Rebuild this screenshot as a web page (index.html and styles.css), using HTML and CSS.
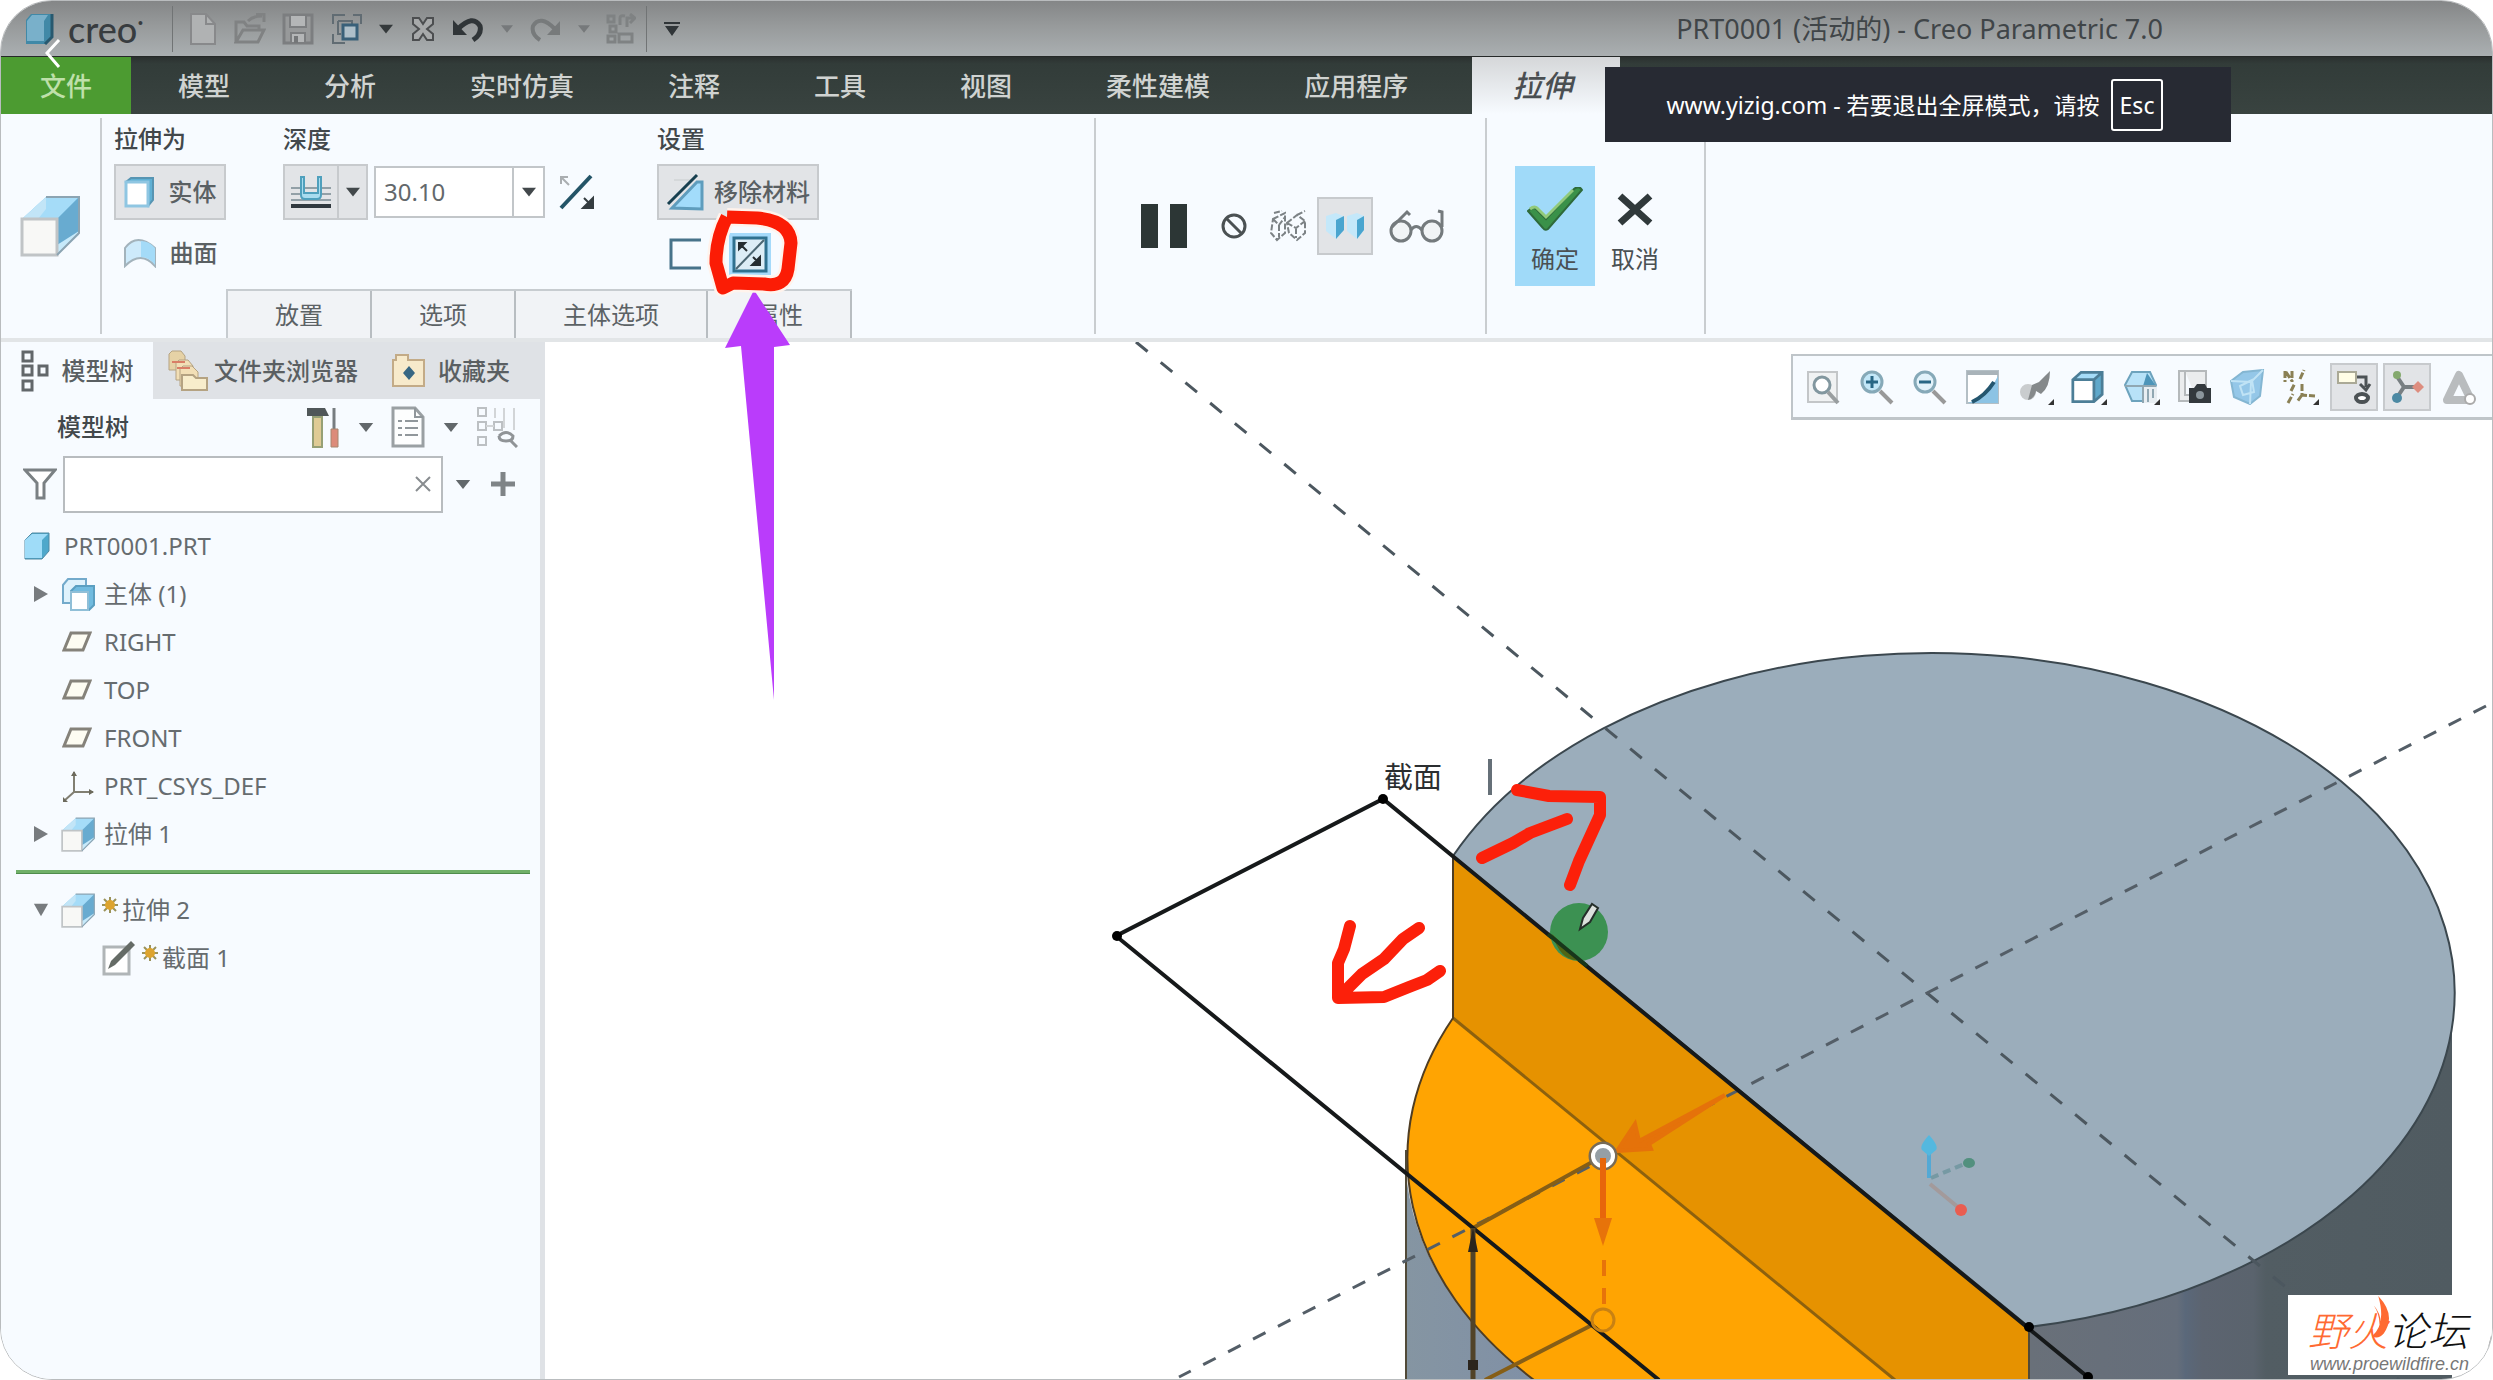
FILE: index.html
```html
<!DOCTYPE html>
<html lang="zh-CN">
<head>
<meta charset="utf-8">
<title>PRT0001 (活动的) - Creo Parametric 7.0</title>
<link rel="stylesheet" href="styles.css">
</head>
<body>
<svg class="defs" aria-hidden="true">
  <symbol id="down" viewBox="0 0 16 10"><path d="M0 0h16L8 10z" fill="currentColor"/></symbol>
  <symbol id="extrude" viewBox="0 0 62 62"><path d="M2 24L26 2h33v36L37 60V24z" fill="#8fd0f2"/><path d="M26 2h33L37 24H2z" fill="#a5dcf8"/><path d="M59 2v36L37 60V24z" fill="#68abd0"/><path d="M37 50l22-14v4L37 60z" fill="#c6e9fa"/><path d="M26 2v12l-8 10H2z" fill="#c2e5f7"/><path d="M2 24h35v36H2z" fill="#f8f8f6" stroke="#c0c4c6" stroke-width="3"/><path d="M26 2h33v36L37 60" fill="none" stroke="#8ca4b2" stroke-width="2"/></symbol>
  <symbol id="plane" viewBox="0 0 30 22"><path d="M9 2h19l-7 17H2z" fill="#fdfcf2" stroke="#85827a" stroke-width="3"/></symbol>
  <symbol id="spark" viewBox="0 0 16 16"><path d="M8 0v16M0 8h16M2 2l12 12M14 2L2 14" stroke="#9b9359" stroke-width="2"/><circle cx="8" cy="8" r="5" fill="#dda42f"/></symbol>
  <symbol id="cube" viewBox="0 0 36 36"><path d="M2 10l9-8h23v24l-9 8z" fill="#5fa8ca"/><path d="M2 10l9-8h23l-9 8z" fill="#a5dcf8"/><path d="M2 10h23v24H2z" fill="#fff"/><path d="M2 10l9-8h23v24l-9 8H2zh23v24M25 10l9-8" fill="none" stroke="#4c7e97" stroke-width="3"/></symbol>
  <symbol id="solid" viewBox="0 0 32 32"><path d="M2 6l5-4h22v22l-5 6z" fill="#5fb0d4" stroke="#5795b3" stroke-width="2"/><path d="M2 6h22v24H2z" fill="#fff" stroke="#8fc6e2" stroke-width="3"/></symbol>
</svg>
<div class="app">
  <header class="titlebar">
    <svg class="logo" viewBox="0 0 30 32"><path d="M7 1h21v23l-7 7H2V7z" fill="#4189a7"/><path d="M3 8l5-6h16l-4 6v20H3z" fill="#79b0ca"/><path d="M28 1v23l-7 7" fill="none" stroke="#28596f" stroke-width="3"/></svg>
    <span class="brand">creo<sup>·</sup></span>
    <div class="quick">
      <button class="q" aria-label="新建"><svg width="28" height="34" viewBox="0 0 28 34"><path d="M2 2h15l9 10v20H2z" fill="#b0b2b3" stroke="#88898b" stroke-width="2"/><path d="M17 2v10h9" fill="none" stroke="#88898b" stroke-width="2"/></svg></button>
      <button class="q" aria-label="打开"><svg width="32" height="32" viewBox="0 0 32 32"><path d="M2 29V9h8l3 4h12v5M2 29l7-12h21l-6 12zM14 8q5-5 14-5M22 1h8v8" fill="none" stroke="#808283" stroke-width="3"/></svg></button>
      <button class="q" aria-label="保存"><svg width="32" height="32" viewBox="0 0 32 32"><path d="M2 2h28v28H2z" fill="#97999a" stroke="#7c7e80" stroke-width="3"/><path d="M8 2h16v12H8zM9 20h14v10H9z" fill="#b4b6b7" stroke="#7c7e80" stroke-width="2"/><path d="M12 23h4v7h-4z" fill="#747678"/></svg></button>
      <button class="q" aria-label="窗口"><svg width="32" height="32" viewBox="0 0 32 32"><path d="M2 11V2h12M22 2h8v9M2 21v9h12M7 8h14v3M7 8v13h3" fill="none" stroke="#616c73" stroke-width="2"/><path d="M12 12h14v14H12z" fill="#aebfc9" stroke="#396079" stroke-width="3"/></svg></button>
      <button class="q small" aria-label="窗口列表"><svg width="14" height="10"><use href="#down"/></svg></button>
      <button class="q" aria-label="关闭"><svg width="26" height="28" viewBox="0 0 26 28"><path d="M3 3h6l4 6 4-6h6v6l-6 5 6 5v6h-6l-4-6-4 6H3v-6l6-5-6-5z" fill="#a7a9aa" stroke="#4c4e50" stroke-width="2"/></svg></button>
      <button class="q" aria-label="撤销"><svg width="32" height="28" viewBox="0 0 32 28"><path d="M6 14Q21-1 28 11q2 8-7 14" fill="none" stroke="#303538" stroke-width="5"/><path d="M1 5v15h14z" fill="#303538"/></svg></button>
      <button class="q small pale" aria-label="撤销列表"><svg width="12" height="8"><use href="#down"/></svg></button>
      <button class="q" aria-label="重做"><svg width="32" height="28" viewBox="0 0 32 28"><path d="M26 14Q11-1 4 11q-2 8 7 14" fill="none" stroke="#777a7b" stroke-width="4"/><path d="M31 6v14H18z" fill="#777a7b"/></svg></button>
      <button class="q small pale" aria-label="重做列表"><svg width="12" height="8"><use href="#down"/></svg></button>
      <button class="q" aria-label="重新生成"><svg width="30" height="32" viewBox="0 0 30 32"><path d="M2 3h6v6H2zM4 13h6v6H4zM2 23h7v6H2zM13 21h13v8H13zM14 12V5q0-3 5-2M21 14V5h6M24 1l5 4-5 5" fill="none" stroke="#7f8283" stroke-width="3"/></svg></button>
    </div>
    <button class="more" aria-label="自定义"><svg width="16" height="14" viewBox="0 0 16 14"><path d="M0 0h16v2H0zM1 4h14L8 14z" fill="#303538"/></svg></button>
    <h1 class="title">PRT0001 (活动的) - Creo Parametric 7.0</h1>
  </header>

  <nav class="tabs">
    <button class="tab file">文件</button><button class="tab">模型</button><button class="tab">分析</button><button class="tab">实时仿真</button><button class="tab">注释</button><button class="tab">工具</button><button class="tab">视图</button><button class="tab">柔性建模</button><button class="tab last">应用程序</button><button class="tab active">拉伸</button>
  </nav>

  <section class="ribbon">
    <div class="feature"><svg width="62" height="62"><use href="#extrude"/></svg></div>
    <div class="settings">
      <div class="groups">
        <div class="group type">
          <h2>拉伸为</h2>
          <button class="tool on"><svg width="32" height="32"><use href="#solid"/></svg>实体</button>
          <button class="tool"><svg width="34" height="30" viewBox="0 0 34 30"><path d="M2 28V10Q14-6 32 10v18Q18 12 2 28z" fill="#cdeafb" stroke="#a3b3bc" stroke-width="2"/><path d="M18 3v16q8 0 14 8V10Q26 3 18 3z" fill="#a4dbf8"/></svg>曲面</button>
        </div>
        <div class="group depth">
          <h2 id="depth-label">深度</h2>
          <div class="line">
            <div class="split"><button aria-label="深度选项"><svg width="42" height="34" viewBox="0 0 42 34"><path d="M1 13h40M1 19h40M1 25h40" stroke="#92a0a7" stroke-width="2"/><path d="M11 2v18q0 4 4 4h12q4 0 4-4V2h-3v16H14V2z" fill="#a9dcef" stroke="#4fa0bd" stroke-width="2"/><path d="M1 31h40" stroke="#30393f" stroke-width="4"/></svg></button><button class="drop" aria-label="深度列表"><svg width="14" height="10"><use href="#down"/></svg></button></div>
            <div class="combo"><input type="text" value="30.10" aria-labelledby="depth-label"><button class="drop" aria-label="最近的值"><svg width="14" height="10"><use href="#down"/></svg></button></div>
            <button class="flip" aria-label="反向"><svg width="36" height="36" viewBox="0 0 36 36"><path d="M2 34L32 2" stroke="#235467" stroke-width="4"/><path d="M2 10V3h7M3 4l7 7" fill="none" stroke="#aaaeb1" stroke-width="2"/><path d="M25 24l6 6M34 24v10H24z" fill="#343c40" stroke="#343c40" stroke-width="2"/></svg></button>
          </div>
        </div>
        <div class="group set">
          <h2>设置</h2>
          <button class="tool on remove"><svg width="38" height="38" viewBox="0 0 38 38"><path d="M8 7h18" stroke="#d5d8da" stroke-width="2"/><path d="M6 35L31 9h5v27z" fill="#a2dcfb" stroke="#5f9dbd" stroke-width="3"/><path d="M2 31L31 2" stroke="#173f4f" stroke-width="3"/></svg>移除材料</button>
          <div class="line second">
            <button class="plain" aria-label="加厚草绘"><svg width="32" height="32" viewBox="0 0 32 32"><path d="M32 2H2v28h30" fill="none" stroke="#47738a" stroke-width="3"/></svg></button>
            <div class="flip-side">
              <button aria-label="反向材料侧"><svg width="42" height="42" viewBox="0 0 42 42"><path d="M0 0h42v42H0z" fill="#a5dafa"/><path d="M5 5h32v33H5z" fill="#dcedf6" stroke="#2f718f" stroke-width="3"/><path d="M7 36L35 7" stroke="#4b6672" stroke-width="2"/><path d="M10 16V10h6zM13 13l5 5M24 24l5 5M31 24v8h-8z" fill="#252d31" stroke="#252d31" stroke-width="2"/></svg></button>
              <svg class="markup" width="120" height="500" viewBox="700 200 120 500" aria-hidden="true">
                <path d="M755 290L791 345L775 347V700L742 346L726 348z" fill="#ba3cfb"/>
                <path d="M728 217L758 218Q791 221 792 243L789 269Q786 288 765 284L734 283L724 288L717 263Q717 238 728 217" fill="none" stroke="#fff3ec" stroke-width="18" stroke-linejoin="round"/>
                <path d="M728 217L758 218Q791 221 792 243L789 269Q786 288 765 284L734 283L724 288L717 263Q717 238 728 217" fill="none" stroke="#fb1c05" stroke-width="13" stroke-linejoin="round"/>
              </svg>
            </div>
          </div>
        </div>
      </div>
      <div class="subtabs"><button>放置</button><button>选项</button><button>主体选项</button><button>属性</button></div>
    </div>
    <div class="control">
      <button aria-label="暂停"><svg width="46" height="44" viewBox="0 0 46 44"><path d="M0 0h17v44H0zM29 0h17v44H29z" fill="#2c3635"/></svg></button>
      <button aria-label="无预览"><svg width="26" height="28" viewBox="0 0 26 28"><circle cx="13" cy="14" r="11" fill="none" stroke="#4b5153" stroke-width="3"/><path d="M5 6l16 16" stroke="#4b5153" stroke-width="3"/></svg></button>
      <button aria-label="分离"><svg width="38" height="34" viewBox="0 0 38 34"><path d="M4 10l12-6v20l-8 7-6-7zM4 10l6 6 6-8M10 16v12M18 14l10-8 8 6v12l-8 7-8-7zM18 14l9 5 9-7M27 19v10M5 4l8-2M28 6l8-4" fill="none" stroke="#7c8285" stroke-width="2" stroke-dasharray="6 2"/></svg></button>
      <button class="on" aria-label="连接"><svg width="40" height="28" viewBox="0 0 40 28"><path d="M1 4l10-3 7 3v14l-7 9L1 19z" fill="#c4e8fa"/><path d="M11 8l8-4v14l-8 9z" fill="#4aa5cf"/><path d="M22 4l10-3 7 3v14l-7 9-10-8z" fill="#c4e8fa"/><path d="M32 8l7-4v14l-7 9z" fill="#4aa5cf"/></svg></button>
      <button aria-label="预览"><svg width="56" height="34" viewBox="0 0 56 34"><circle cx="12" cy="22" r="10" fill="#f1f4f6" stroke="#747a7d" stroke-width="3"/><circle cx="43" cy="22" r="10" fill="#f1f4f6" stroke="#747a7d" stroke-width="3"/><path d="M22 21q5-7 11 0M3 18L18 3l3 3M53 18V3l-4-1" fill="none" stroke="#747a7d" stroke-width="3"/></svg></button>
    </div>
    <div class="finish">
      <button class="ok"><svg width="56" height="44" viewBox="0 0 56 44"><path d="M1 24q6-6 10 0l8 8L47 2q5-4 8 1L21 42q-3 2-5-1z" fill="#3a9149" stroke="#2e6a3a" stroke-width="2"/><path d="M3 22q5-4 8 0l8 8L46 3" fill="none" stroke="#92ca7b" stroke-width="3"/></svg>确定</button>
      <button><svg width="38" height="44" viewBox="0 0 38 44"><path d="M4 9l30 27M34 9L4 36" stroke="#30393b" stroke-width="7"/></svg>取消</button>
    </div>
  </section>

  <main class="work">
    <aside class="side">
      <div class="side-tabs">
        <button class="current"><svg width="28" height="42" viewBox="0 0 28 42"><path d="M2 2h9v9H2zM2 16h9v9H2zM2 31h9v9H2zM18 16h8v9h-8z" fill="none" stroke="#62676a" stroke-width="3"/></svg>模型树</button>
        <button class="folders"><svg width="40" height="42" viewBox="0 0 40 42"><path d="M1 4l3-3h9l4 5v14H1z" fill="#e6d2a6" stroke="#b5a382"/><path d="M8 13l3-3h9l5 6v14H8z" fill="#f2dfb6" stroke="#b5a382"/><path d="M12 19l3-3h9l6 6v14H12z" fill="#f2dfb6" stroke="#b5a382"/><path d="M4 12h13M9 18h13" stroke="#d97e66" stroke-width="2"/><path d="M14 25h11l3 3h11v12H14z" fill="#f8edcb" stroke="#b5a382" stroke-width="2"/></svg>文件夹浏览器</button>
        <button class="favs"><svg width="36" height="34" viewBox="0 0 36 34"><path d="M2 6h3V1h12v5h16v26H2z" fill="#f7eacb" stroke="#c3ab87" stroke-width="2"/><path d="M18 12l6 7-6 7-6-7z" fill="#376783"/></svg>收藏夹</button>
      </div>
      <div class="side-head">
        <h2>模型树</h2>
        <button aria-label="设置"><svg width="34" height="42" viewBox="0 0 34 42"><path d="M7 11h9v30H7z" fill="#dfcb95" stroke="#96a075" stroke-width="2"/><path d="M1 2h18l4 8H1z" fill="#505759"/><path d="M28 2v24" stroke="#777d80" stroke-width="3"/><path d="M25 23h7v18h-7z" fill="#dc8b7a" stroke="#a6866e"/></svg></button>
        <button class="arrow" aria-label="设置列表"><svg width="16" height="9"><use href="#down"/></svg></button>
        <button aria-label="显示"><svg width="34" height="42" viewBox="0 0 34 42"><path d="M2 2h22l8 9v29H2z" fill="#fdfefe" stroke="#9aa0a3" stroke-width="3"/><path d="M24 2v9h8M7 15h4M14 15h13M7 22h4M14 22h13M7 29h4M14 29h13" fill="none" stroke="#90979b" stroke-width="2"/></svg></button>
        <button class="arrow" aria-label="显示列表"><svg width="16" height="9"><use href="#down"/></svg></button>
        <button class="find" aria-label="查找"><svg width="42" height="42" viewBox="0 0 42 42"><path d="M2 2h8v8H2zM2 16h8v8H2zM2 31h8v8H2zM18 16h8v8h-8z" fill="none" stroke="#bcc0c3" stroke-width="2"/><path d="M19 2v10M28 2v20M38 2v22M10 20h8" stroke="#d2d5d7" stroke-width="2"/><path d="M23 30q7-7 14 0 0 5-7 5t-7-5M34 34l7 7" fill="none" stroke="#909497" stroke-width="3"/></svg></button>
      </div>
      <div class="search">
        <svg width="34" height="32" viewBox="0 0 34 32"><path d="M2 2h30L21 15v15h-7V15z" fill="#fff" stroke="#7a8083" stroke-width="3"/></svg>
        <div class="field"><input type="search" aria-label="搜索模型树"><button aria-label="清除"><svg width="18" height="18" viewBox="0 0 18 18"><path d="M2 2l14 14M16 2L2 16" stroke="#888c8f" stroke-width="2"/></svg></button></div>
        <button class="arrow" aria-label="过滤列表"><svg width="16" height="9"><use href="#down"/></svg></button>
        <button class="add" aria-label="添加"><svg width="24" height="24" viewBox="0 0 24 24"><path d="M12 0v24M0 12h24" stroke="#7f8487" stroke-width="5"/></svg></button>
      </div>
      <ul class="tree">
        <li class="root"><svg width="28" height="28" viewBox="0 0 28 28"><path d="M2 8l7-7h17v18l-7 8H2z" fill="#4fa8cb" stroke="#5189a2"/><path d="M2 8l7-6h16l-6 6v18H2z" fill="#9fdcf8"/></svg>PRT0001.PRT</li>
        <li><svg class="caret" viewBox="0 0 16 18"><path d="M1 1l14 8-14 8z"/></svg><svg width="35" height="35" viewBox="0 0 35 35"><path d="M2 8l5-6h18v18l-5 6H2z" fill="#dff2fc" stroke="#73aacb" stroke-width="2"/><path d="M10 14l5-5h18v19l-5 5H10z" fill="#71bbdf" stroke="#5b9fc1" stroke-width="2"/><path d="M10 15h17v18H10z" fill="#fff" stroke="#90bfd7" stroke-width="2"/></svg>主体 (1)</li>
        <li class="leaf"><svg width="30" height="22"><use href="#plane"/></svg>RIGHT</li>
        <li class="leaf"><svg width="30" height="22"><use href="#plane"/></svg>TOP</li>
        <li class="leaf"><svg width="30" height="22"><use href="#plane"/></svg>FRONT</li>
        <li class="leaf"><svg width="33" height="33" viewBox="0 0 33 33"><path d="M12 2v20h19M12 22L2 31" fill="none" stroke="#817f72" stroke-width="2"/><path d="M9 6l3-5 3 5zM27 19l5 3-5 3zM1 27v5h5z" fill="#6c6a5c"/></svg>PRT_CSYS_DEF</li>
        <li><svg class="caret" viewBox="0 0 16 18"><path d="M1 1l14 8-14 8z"/></svg><svg width="35" height="35"><use href="#extrude"/></svg>拉伸 1</li>
        <li class="insert" aria-label="在此插入"></li>
        <li><svg class="caret" viewBox="0 0 18 16"><path d="M1 1h16L9 15z"/></svg><svg width="35" height="35"><use href="#extrude"/></svg><svg class="spark" width="16" height="16"><use href="#spark"/></svg>拉伸 2</li>
        <li class="nested"><svg width="34" height="36" viewBox="0 0 34 36"><path d="M2 7h25v27H2z" fill="#fff" stroke="#b0b5b7" stroke-width="3"/><path d="M6 29l3-8L29 1l4 4-20 20z" fill="#656b66"/></svg><svg class="spark" width="16" height="16"><use href="#spark"/></svg>截面 1</li>
      </ul>
    </aside>

    <div class="viewport">
      <svg class="scene" viewBox="546 342 1947 1038" preserveAspectRatio="xMinYMin slice" role="img" aria-label="拉伸切割预览">
        <defs>
          <linearGradient id="wall"><stop offset="0" stop-color="#697079"/><stop offset=".35" stop-color="#656e7b"/><stop offset=".37" stop-color="#5a687a"/><stop offset=".41" stop-color="#5c6470"/><stop offset=".53" stop-color="#5a636d"/><stop offset=".56" stop-color="#525d63"/><stop offset="1" stop-color="#505b61"/></linearGradient>
          <linearGradient id="wall2"><stop offset="0" stop-color="#8595a2"/><stop offset="1" stop-color="#8090a6"/></linearGradient>
        </defs>
        <path d="M2030 1327V1380H2453V993z" fill="url(#wall)"/>
        <path d="M1406 1150V1380H1536Q1406 1280 1406 1150" fill="url(#wall2)"/>
        <path d="M1454 856A523 340 0 1 1 2030 1327z" fill="#9badbb" stroke="#3b474e" stroke-width="2"/>
        <path d="M1454 1018A522 341 0 0 0 1535 1380H1896z" fill="#ffa402"/>
        <path d="M1454 856L2030 1327V1380H1896L1454 1018z" fill="#e69200"/>
        <path d="M1454 1018L1896 1380" stroke="#8d610e" stroke-width="3"/>
        <path d="M1454 856V1018A522 341 0 0 0 1535 1380" fill="none" stroke="#4f3d23" stroke-width="2"/>
        <path d="M1407 1150V1380M2030 1327V1380" stroke="#514a38" stroke-width="2"/>
        <path d="M1137 342L1928 993L2400 1380" fill="none" stroke="#4c575f" stroke-width="3" stroke-dasharray="15 17"/>
        <path d="M2487 706L1928 993L1740 1090L1180 1377" fill="none" stroke="#545e67" stroke-width="3" stroke-dasharray="14 14"/>
        <path d="M1604 1156L1474 1228M1593 1325L1486 1380" stroke="#865e16" stroke-width="4"/>
        <path d="M1660 1380L1117 936L1384 799L2090 1378" fill="none" stroke="#16191a" stroke-width="4"/>
        <circle cx="1118" cy="936" r="5"/><circle cx="1384" cy="799" r="5"/><circle cx="2030" cy="1327" r="5"/><circle cx="2089" cy="1377" r="5"/>
        <path d="M1474 1228V1380" stroke="#514328" stroke-width="5"/><path d="M1469 1252h10l-5-24zM1469 1360h10v10h-10z" fill="#2b251d"/>
        <path d="M1726 1095L1640 1141L1636 1124L1618 1151L1652 1149L1650 1144z" fill="#e5720a" stroke="#e5720a" stroke-width="4"/>
        <circle cx="1604" cy="1156" r="13" fill="#d3d8dc" stroke="#776b57" stroke-width="3"/><circle cx="1604" cy="1156" r="10" fill="#959fa5" stroke="#fff" stroke-width="4"/>
        <path d="M1604 1158V1225" stroke="#e7660b" stroke-width="6"/><path d="M1595 1218h18l-9 28z" fill="#e7730a"/><path d="M1605 1260V1305" stroke="#e7730a" stroke-width="4" stroke-dasharray="16 12"/>
        <circle cx="1604" cy="1320" r="11" fill="none" stroke="#c88113" stroke-width="3"/>
        <text x="1385" y="788" class="section-name">截面</text><path d="M1491 759V795" stroke="#667078" stroke-width="4"/>
        <g fill="none" stroke="#fc200a" stroke-width="12" stroke-linecap="round" stroke-linejoin="round"><path d="M1518 790L1550 796L1601 797V815L1580 861L1571 885M1483 858L1514 843L1531 833L1568 819M1351 926L1345 949L1339 963V998L1385 997L1410 987L1428 980L1441 971M1420 928L1404 939L1385 959L1363 974L1340 997"/></g>
        <circle cx="1580" cy="932" r="29" fill="#3c9152"/><path d="M1553 934L1580 960Q1562 962 1553 934" fill="#506514"/><path d="M1549 934L1588 966" stroke="#18361b" stroke-width="4"/>
        <path d="M1581 929l3-11 9-14 6 4-8 14z" fill="#dce1dd" stroke="#252e29" stroke-width="2"/>
        <path d="M1930 1178V1145" stroke="#53a9d5" stroke-width="4"/><path d="M1930 1135q10 11 7 15l-7 6-7-6q-3-4 7-15" fill="#54b8df"/><path d="M1932 1178L1970 1162" stroke="#7699a3" stroke-width="4" stroke-dasharray="8 5"/><ellipse cx="1970" cy="1163" rx="6" ry="5" fill="#52907e"/><path d="M1931 1184L1960 1208" stroke="#a39a9b" stroke-width="4"/><circle cx="1962" cy="1210" r="6" fill="#e95d50"/>
      </svg>
      <div class="viewbar">
        <button aria-label="重新调整"><svg viewBox="0 0 36 36"><path d="M2 3h29v30H2z" fill="#f0f2f3" stroke="#c3c6c8" stroke-width="2"/><circle cx="16" cy="16" r="8" fill="#fff" stroke="#82979f" stroke-width="3"/><path d="M22 23l10 11" stroke="#999ea0" stroke-width="4"/></svg></button>
        <button aria-label="放大"><svg viewBox="0 0 36 36"><circle cx="13" cy="13" r="10" fill="#c3e7f8" stroke="#86a9b8" stroke-width="3"/><path d="M7 13h12M13 7v12" stroke="#286785" stroke-width="3"/><path d="M21 22l12 12" stroke="#999" stroke-width="4"/></svg></button>
        <button aria-label="缩小"><svg viewBox="0 0 36 36"><circle cx="13" cy="13" r="10" fill="#e2f2fa" stroke="#86a9b8" stroke-width="3"/><path d="M7 13h12" stroke="#286785" stroke-width="3"/><path d="M21 22l12 12" stroke="#999" stroke-width="4"/></svg></button>
        <button aria-label="重画"><svg viewBox="0 0 36 36"><path d="M2 2h31v32H2z" fill="#fff" stroke="#b4bfc5" stroke-width="2"/><path d="M2 2h31v4H2z" fill="#a9b3b9"/><path d="M33 7v27H3Q23 27 33 7" fill="#8cc3e4"/><path d="M7 33Q20 27 29 13" fill="none" stroke="#24566f" stroke-width="4"/></svg></button>
        <button aria-label="渲染选项"><svg viewBox="0 0 36 36"><circle cx="10" cy="23" r="8" fill="#c9ccce"/><path d="M10 31q7-2 8-9l5 3q9-7 9-23-7 7-11 11l-7 3z" fill="#85898b"/><path d="M36 30v6h-6z" fill="#333"/></svg></button>
        <button aria-label="显示样式"><svg viewBox="0 0 36 36"><use href="#cube" width="33" height="36"/><path d="M36 30v6h-6z" fill="#333"/></svg></button>
        <button aria-label="已保存方向"><svg viewBox="0 0 36 36"><path d="M1 16L8 3h18l6 13-6 16H8z" fill="#b8e2f8" stroke="#6da3bd" stroke-width="2"/><path d="M23 4l9 13H19z" fill="#4d95b9"/><path d="M19 18h14v16H19z" fill="#e8eef2"/><path d="M1 17h31M19 17v17M24 20v13M29 20v9" stroke="#90a7b2" stroke-width="2"/><path d="M36 30v6h-6z" fill="#333"/></svg></button>
        <button aria-label="视图管理器"><svg viewBox="0 0 36 36"><path d="M2 2h27v30H2zM8 2v24h10" fill="#ebedee" stroke="#b5b9bb" stroke-width="2"/><path d="M12 19h5l3-4h8l2 4h4v15H12z" fill="#33393d"/><circle cx="23" cy="26" r="4" fill="#8b969c"/></svg></button>
        <button aria-label="透视图"><svg viewBox="0 0 36 36"><path d="M1 12l12-9 20-2-3 26-10 8-16-7z" fill="#94c7e8" stroke="#84b6d2" stroke-width="2"/><path d="M1 12l20 1L33 1M21 13l-1 22M10 17l12-6 2 12-11 3z" fill="none" stroke="#c0e3f5" stroke-width="2"/></svg></button>
        <button aria-label="基准显示"><svg viewBox="0 0 36 36"><path d="M2 2v11M9 2v11M3 3l6 9M17 10l4-9M8 22l4-8M5 34l5-9M19 15v11l13 1M19 26l-5 7" fill="none" stroke="#8a8055" stroke-width="3" stroke-dasharray="7 2"/><path d="M36 30v6h-6z" fill="#333"/></svg></button>
        <button class="on" aria-label="注释显示"><svg viewBox="0 0 36 36"><path d="M2 3h18v11H2z" fill="#fffde6" stroke="#aaa996" stroke-width="2"/><path d="M21 8h9v10M24 15l6 6 4-6" fill="none" stroke="#4c5255" stroke-width="3"/><ellipse cx="26" cy="29" rx="6" ry="4" fill="#fff" stroke="#4c5255" stroke-width="4"/></svg></button>
        <button class="on" aria-label="旋转中心"><svg viewBox="0 0 36 36"><path d="M7 6l8 12M7 30l8-12h14" fill="none" stroke="#787f82" stroke-width="4"/><circle cx="8" cy="6" r="4" fill="#84a96e"/><circle cx="8" cy="29" r="5" fill="#4c89a3"/><path d="M23 18l6-6 6 6-6 6z" fill="#dd8d7f"/></svg></button>
        <button aria-label="模拟"><svg viewBox="0 0 36 36"><path d="M17 6l12 25H5z" fill="none" stroke="#b9bcbe" stroke-width="8" stroke-linejoin="round"/><circle cx="28" cy="30" r="5" fill="#fff" stroke="#aaa" stroke-width="2"/></svg></button>
      </div>
      <div class="forum">
        <div class="forum-name"><span>野火</span>论坛</div>
        <a href="#">www.proewildfire.cn</a>
        <svg class="flame" viewBox="0 0 24 46" aria-hidden="true"><path d="M9 0Q29 21 15 41Q9 48 2 44Q18 31 9 0M4 10Q15 23 10 37Q12 22 4 10" fill="#ff6a32"/></svg>
        <svg class="slash" viewBox="0 0 6 20" aria-hidden="true"><path d="M1 20L6 1" stroke="#999" stroke-width="2"/></svg>
      </div>
    </div>
  </main>
  <button class="back" aria-label="返回"><svg width="16" height="30" viewBox="0 0 16 30"><path d="M14 1L2 14L14 28" fill="none" stroke="#fff" stroke-width="3"/></svg></button>
  <div class="notice">www.yizig.com - 若要退出全屏模式，请按<kbd>Esc</kbd></div>
</div>
</body>
</html>
```
FILE: styles.css
```css
* { box-sizing: border-box; }
body { margin: 0; background: #fff; font-family: "Noto Sans", "Noto Sans CJK SC", sans-serif; font-size: 24px; line-height: 32px; color: #42484b; }
button, input { font: inherit; color: inherit; margin: 0; padding: 0; border: 0; background: none; border-radius: 0; outline: 0; }
button { display: flex; align-items: center; justify-content: center; white-space: nowrap; flex: none; }
h1, h2 { margin: 0; font: inherit; }
svg { display: block; flex: none; }
.defs { position: absolute; width: 0; height: 0; }
.app { position: relative; display: flex; flex-direction: column; min-height: 100vh; border: 1px solid #b9bcbe; border-radius: 52px; overflow: hidden; background: #fff; }

.titlebar { display: flex; align-items: center; height: 55px; padding-left: 23px; background: linear-gradient(#848687, #979a9b 45%, #aaafb1); }
.logo { width: 30px; height: 32px; }
.brand { width: 104px; padding-left: 14px; font-family: Lato, sans-serif; font-size: 36px; font-weight: 500; color: #383c3f; }
.brand sup { font-size: 24px; line-height: 0; }
.quick { display: flex; align-items: center; justify-content: space-between; width: 475px; height: 46px; padding: 0 10px 0 16px; border: solid #717475; border-width: 0 1px; color: #34393b; margin-left: 14px; }
.pale { color: #76797b; }
.more { width: 50px; }
.title { margin-left: auto; padding-right: 329px; font-size: 27px; line-height: 54px; color: #404548; }

.tabs { display: flex; height: 58px; background: linear-gradient(#2b302f, #323c39 12%, #394340); border-top: 1px solid #252928; }
.tab { padding: 0 47px; font-size: 26px; font-weight: 500; color: #d0d3d1; }
.file { padding: 0 39px; background: #4c9b31; color: #bfe0aa; }
.last { padding-right: 64px; }
.active { width: 148px; padding: 0 8px 0 0; background: linear-gradient(#d5d7d9, #f7fbff); color: #4a4f52; font-size: 30px; font-style: italic; }

.ribbon { display: flex; height: 228px; background: #f7fbff; border-bottom: 4px solid #e2e5e7; }
.feature { display: flex; align-items: center; justify-content: center; width: 101px; margin: 4px 0; border-right: 2px solid #c9cdd0; }
.settings { position: relative; display: flex; flex-direction: column; justify-content: space-between; flex: 0 1 994px; padding-left: 12px; }
.settings::after { content: ""; position: absolute; right: 0; top: 4px; bottom: 4px; width: 2px; background: #c9cdd0; }
.groups { display: flex; }
.group { display: flex; flex-direction: column; align-items: flex-start; }
.group h2 { height: 38px; margin: 9px 0 3px; font-weight: 500; }
.type { width: 169px; }
.depth { width: 374px; }
.line { display: flex; align-items: center; gap: 6px; }
.tool { width: 112px; height: 56px; gap: 13px; border: 2px solid transparent; font-weight: 500; color: #5a6063; }
.tool + .tool { height: 66px; }
.on { background: #e2e4e7; border: 2px solid #c7cacd; }
.remove { width: 162px; gap: 10px; }
.split { display: flex; height: 56px; background: #e2e4e7; border: 2px solid #c7cacd; }
.split button { width: 52px; }
.split .drop { width: 29px; border-left: 2px solid #c7cacd; }
.combo { display: flex; width: 171px; height: 52px; background: #fff; border: 2px solid #c2c6c9; }
.combo input { flex: 1; min-width: 0; padding-left: 8px; color: #63686b; }
.combo .drop { width: 31px; border-left: 2px solid #c2c6c9; }
.flip { margin-left: 8px; }
.second { gap: 28px; padding-left: 12px; height: 68px; }
.flip-side { position: relative; }
.markup { position: absolute; left: -30px; top: -33px; z-index: 5; pointer-events: none; }
.subtabs { display: flex; height: 49px; margin-left: 112px; border: solid #c7ccd0; border-width: 2px 0 0 2px; align-self: flex-start; }
.subtabs button { padding: 0 47px; background: #f1f3f6; border-right: 2px solid #b8bdc1; color: #5c6265; }
.control { display: flex; align-items: center; justify-content: center; width: 391px; margin: 4px 0; padding-left: 4px; border-right: 2px solid #c9cdd0; }
.control button { margin-right: 16px; height: 58px; }
.control button:first-child { margin-right: 34px; }
.control button:nth-child(2) { margin-right: 22px; }
.control button:nth-child(3) { margin-right: 10px; }
.control .on { width: 56px; }
.control button:last-child { margin-right: 0; }
.finish { display: flex; align-items: center; width: 219px; padding-left: 28px; margin: 4px 0; border-right: 2px solid #c9cdd0; }
.finish button { flex-direction: column; gap: 12px; width: 80px; height: 120px; padding-top: 10px; color: #4a5053; }
.finish .ok { background: #a0daf9; }

.work { display: flex; flex: 1; }
.side { width: 544px; flex: none; background: #f7fbff; border-right: 5px solid #dfe2e6; }
.side-tabs { display: flex; height: 57px; background: #dfe2e6; }
.side-tabs button { gap: 13px; font-weight: 500; color: #5a5f62; }
.side-tabs .current { width: 152px; background: #f7fbff; }
.side-tabs .folders { gap: 6px; padding-left: 15px; }
.side-tabs .favs { gap: 11px; padding-left: 33px; }
.side-head { display: flex; align-items: center; height: 56px; padding-left: 56px; }
.side-head h2 { width: 249px; font-weight: 500; }
.arrow { width: 51px; color: #62686b; }
.search { display: flex; align-items: center; height: 58px; padding-left: 22px; gap: 6px; }
.field { position: relative; width: 380px; height: 57px; }
.field input { width: 100%; height: 100%; padding: 0 40px 0 10px; background: #fff; border: 2px solid #b8bcbf; }
.field button { position: absolute; right: 11px; top: 19px; }
.search .arrow { width: 28px; }
.add { margin-left: 8px; }
.tree { list-style: none; margin: 9px 0 0; padding: 0; color: #666c6f; }
.tree li { display: flex; align-items: center; height: 48px; gap: 8px; padding-left: 32px; }
.tree .root { padding-left: 22px; gap: 13px; }
.tree .leaf { padding-left: 61px; gap: 12px; }
.tree .leaf:nth-child(6) { gap: 9px; }
.caret { width: 16px; height: 18px; margin-right: 4px; fill: #777b7e; }
.tree .nested { padding-left: 101px; }
.tree .spark { margin: -10px -4px 0 -2px; }
.tree .insert { height: 4px; margin: 12px 10px 12px 15px; padding: 0; background: #70b069; border-bottom: 1px solid #4f8d4c; }

.viewport { position: relative; flex: 1; min-width: 0; overflow: hidden; }
.scene { position: absolute; inset: 0; width: 100%; height: 100%; }
.section-name { font-size: 29px; fill: #2b2e30; }
.viewbar { position: absolute; right: -1px; top: 12px; display: flex; align-items: center; gap: 5px; height: 66px; width: 702px; padding-left: 7px; background: #f7fbff; border: solid #bfc5c9; border-width: 2px 0 3px 2px; }
.viewbar button { width: 48px; height: 48px; }
.viewbar svg { width: 36px; height: 36px; }
.forum { position: absolute; right: 0; bottom: 4px; width: 204px; height: 80px; padding: 12px 0 0 20px; background: #fff; }
.forum-name { font-size: 40px; line-height: 48px; font-weight: 300; font-style: italic; color: #111; white-space: nowrap; }
.forum-name span { color: #ff6a32; }
.forum a { display: block; font: italic 18px/18px "Liberation Sans", sans-serif; color: #777; text-decoration: none; padding-left: 2px; }
.flame { position: absolute; left: 81px; top: 1px; width: 24px; height: 42px; }
.slash { position: absolute; right: 0; top: 40px; width: 6px; height: 20px; }

.back { position: absolute; left: 44px; top: 38px; }
.notice { position: absolute; top: 66px; right: 261px; width: 626px; height: 75px; display: flex; align-items: center; justify-content: center; gap: 11px; padding-right: 6px; background: #272a33; color: #fff; font-size: 23px; white-space: nowrap; }
.notice kbd { font: inherit; height: 52px; line-height: 48px; padding: 0 7px; border: 2px solid #fff; border-radius: 3px; }
```
